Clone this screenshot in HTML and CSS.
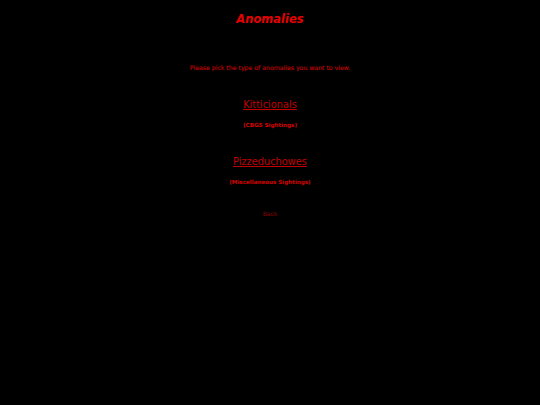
FILE: index.html
```html
<!DOCTYPE html>
<html>
<head>
<meta charset="utf-8">
<link rel="stylesheet" href="styles.css">
</head>
<body>
<div class="page">
  <h1 class="title">Anomalies</h1>
  <p class="intro">Please pick the type of anomalies you want to view.</p>
  <div class="choice">
    <a class="choice-link" href="#">Kitticionals</a>
    <p class="choice-note">(CBGS Sightings)</p>
  </div>
  <div class="choice">
    <a class="choice-link" href="#">Pizzeduchowes</a>
    <p class="choice-note">(Miscellaneous Sightings)</p>
  </div>
  <a class="back" href="#">Back</a>
</div>
</body>
</html>
```
FILE: styles.css
```css
html, body {
  margin: 0;
  padding: 0;
  background: #000;
}
body {
  font-family: "Comic Sans MS", "DejaVu Sans", sans-serif;
  color: #e00000;
}
.page {
  display: flex;
  flex-direction: column;
  align-items: center;
  padding-top: 11px;
}
.title {
  margin: 0;
  font-size: 11.5px;
  font-weight: bold;
  font-style: italic;
  color: #e80000;
  line-height: 17px;
}
.intro {
  margin: 36px 0 0;
  font-size: 6.2px;
  line-height: 8px;
  color: #e00000;
}
.choice {
  display: flex;
  flex-direction: column;
  align-items: center;
  margin-top: 26px;
}
.choice + .choice {
  margin-top: 26px;
}
.choice-link {
  font-size: 9.8px;
  line-height: 13px;
  color: #c00000;
  text-decoration: underline;
}
.choice-note {
  margin: 10px 0 0;
  font-size: 5.6px;
  line-height: 8px;
  font-weight: bold;
  color: #d80000;
}
.back {
  margin-top: 24px;
  font-size: 6px;
  line-height: 8px;
  color: #900000;
  text-decoration: none;
}
```
